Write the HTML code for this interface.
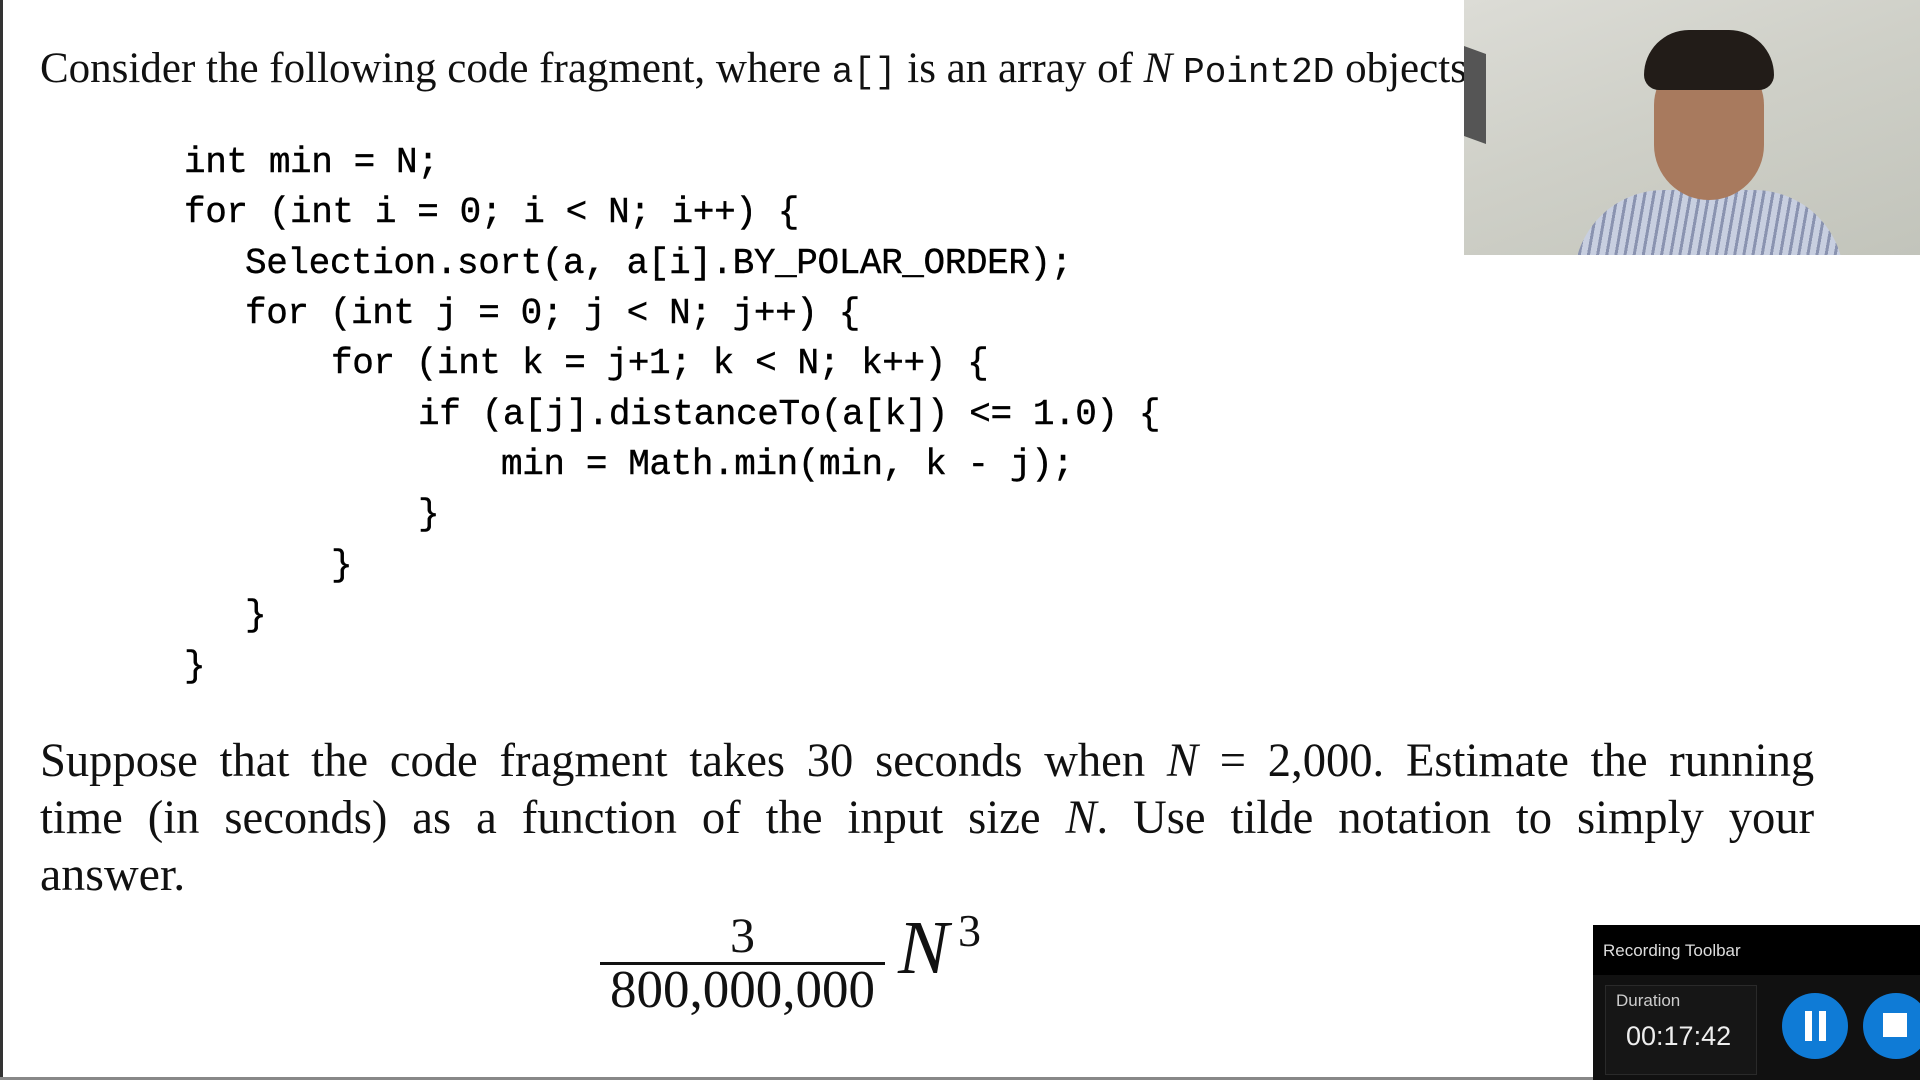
<!DOCTYPE html>
<html><head><meta charset="utf-8"><style>
html,body{margin:0;padding:0;width:1920px;height:1080px;overflow:hidden;background:#fff;}
body{position:relative;font-family:"Liberation Serif",serif;color:#111;}
.ln{position:absolute;white-space:nowrap;}
.code{position:absolute;font-family:"Liberation Mono",monospace;font-size:36px;white-space:pre;letter-spacing:-0.4px;color:#000;-webkit-text-stroke:0.4px #000;}
.tt{font-family:"Liberation Mono",monospace;font-size:36px;}
.j{position:absolute;left:40px;font-size:48px;transform-origin:0 0;transform:scaleX(0.97);width:1829px;text-align:justify;text-align-last:justify;white-space:nowrap;}
</style></head><body>
<div style="position:absolute;left:0;top:0;width:3px;height:1080px;background:#333"></div>
<div style="position:absolute;left:0;top:1077px;width:1920px;height:3px;background:#888"></div>

<div class="ln" style="left:40px;top:44px;font-size:43px;">Consider the following code fragment, where <span class="tt">a[]</span> is an array of <i>N</i> <span class="tt">Point2D</span> objects</div>

<div class="code" style="left:184px;top:142px">int min = N;</div>
<div class="code" style="left:184px;top:192px">for (int i = 0; i &lt; N; i++) {</div>
<div class="code" style="left:245px;top:243px">Selection.sort(a, a[i].BY_POLAR_ORDER);</div>
<div class="code" style="left:245px;top:293px">for (int j = 0; j &lt; N; j++) {</div>
<div class="code" style="left:331px;top:343px">for (int k = j+1; k &lt; N; k++) {</div>
<div class="code" style="left:418px;top:394px">if (a[j].distanceTo(a[k]) &lt;= 1.0) {</div>
<div class="code" style="left:501px;top:444px">min = Math.min(min, k - j);</div>
<div class="code" style="left:418px;top:494px">}</div>
<div class="code" style="left:331px;top:545px">}</div>
<div class="code" style="left:245px;top:595px">}</div>
<div class="code" style="left:184px;top:646px">}</div>

<div class="j" style="top:733px">Suppose that the code fragment takes 30 seconds when <i>N</i> = 2,000. Estimate the running</div>
<div class="j" style="top:790px">time (in seconds) as a function of the input size <i>N</i>. Use tilde notation to simply your</div>
<div class="ln" style="left:40px;top:847px;font-size:48px;">answer.</div>

<div class="ln" style="left:600px;top:906px;width:285px;text-align:center;font-size:50px">3</div>
<div style="position:absolute;left:600px;top:962px;width:285px;height:3px;background:#111"></div>
<div class="ln" style="left:590px;top:960px;width:305px;text-align:center;font-size:53px;">800,000,000</div>
<div class="ln" style="left:898px;top:905px;font-size:76px;font-style:italic">N</div>
<div class="ln" style="left:958px;top:904px;font-size:46px">3</div>

<div style="position:absolute;left:1464px;top:0;width:456px;height:255px;background:linear-gradient(160deg,#dcdcd6 0%,#cfd0c8 45%,#c2c4bb 100%);overflow:hidden">
  <div style="position:absolute;left:0;top:50px;width:22px;height:90px;background:#555;transform:skewY(20deg)"></div>
  <div style="position:absolute;left:110px;top:190px;width:270px;height:90px;border-radius:120px 120px 0 0;background:repeating-linear-gradient(100deg,#c8cfe0 0 6px,#8a93b0 6px 9px)"></div>
  <div style="position:absolute;left:190px;top:55px;width:110px;height:145px;border-radius:50px 50px 55px 55px;background:#a87a5e"></div>
  <div style="position:absolute;left:180px;top:30px;width:130px;height:60px;border-radius:60px 60px 20px 20px;background:#221c18"></div>
</div>

<div style="position:absolute;left:1593px;top:925px;width:327px;height:155px;background:#111">
  <div style="position:absolute;left:0;top:0;width:327px;height:50px;background:#000"></div>
  <div style="position:absolute;left:10px;top:16px;font-family:'Liberation Sans',sans-serif;font-size:17px;color:#ddd">Recording Toolbar</div>
  <div style="position:absolute;left:12px;top:60px;width:150px;height:88px;border:1px solid #2a2a2a;background:#161616"></div>
  <div style="position:absolute;left:23px;top:66px;font-family:'Liberation Sans',sans-serif;font-size:17px;color:#ccc">Duration</div>
  <div style="position:absolute;left:33px;top:96px;font-family:'Liberation Sans',sans-serif;font-size:27px;color:#eee">00:17:42</div>
  <div style="position:absolute;left:189px;top:68px;width:66px;height:66px;border-radius:50%;background:#0f7bd6"></div>
  <div style="position:absolute;left:212px;top:86px;width:7px;height:30px;background:#fff"></div>
  <div style="position:absolute;left:226px;top:86px;width:7px;height:30px;background:#fff"></div>
  <div style="position:absolute;left:270px;top:68px;width:66px;height:66px;border-radius:50%;background:#0f7bd6"></div>
  <div style="position:absolute;left:290px;top:88px;width:24px;height:24px;background:#fff"></div>
</div>
</body></html>
